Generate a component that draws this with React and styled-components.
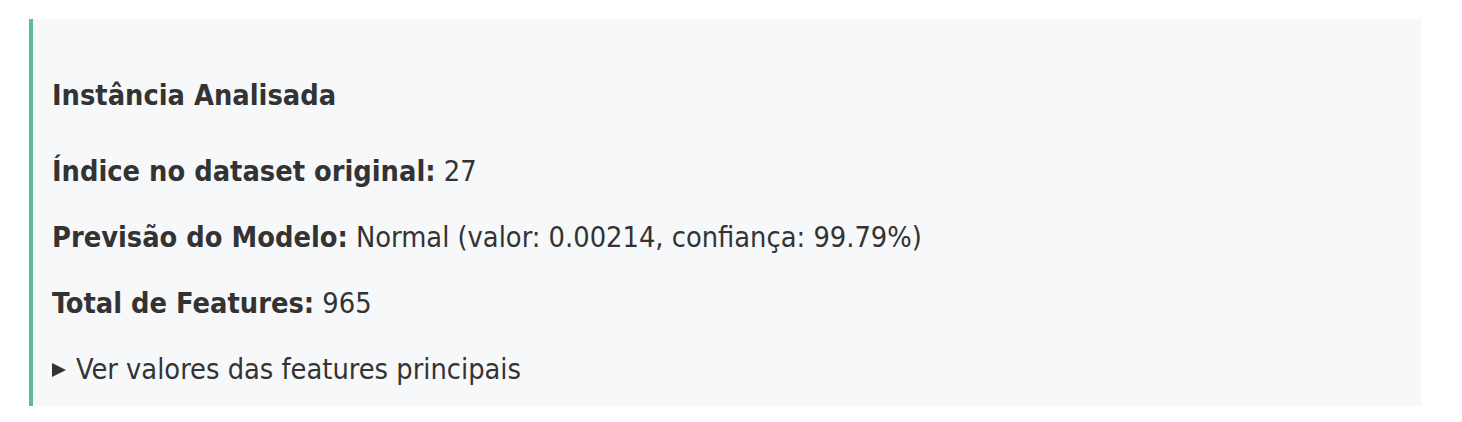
import styled, { createGlobalStyle } from "styled-components";

const GlobalStyle = createGlobalStyle`
  body {
    margin: 0;
    background: #ffffff;
    font-family: "DejaVu Sans Condensed", "DejaVu Sans", sans-serif;
    color: #333333;
  }
`;

const Page = styled.div`
  padding: 19px 41px 0 29px;
`;

const Card = styled.div`
  background: #f7f8fa;
  border-left: 4px solid #5dbb9d;
  padding: 58px 20px 19px 19px;
  font-size: 28.7px;
`;

const Title = styled.h4`
  margin: 0 0 40px;
  font-size: 28.7px;
  line-height: 36px;
  font-weight: bold;
`;

const Line = styled.p`
  margin: 0 0 30px;
  line-height: 36px;
`;

const Label = styled.strong`
  font-weight: bold;
`;

const Details = styled.details`
  line-height: 36px;
`;

const Summary = styled.summary`
  display: flex;
  align-items: center;
  cursor: pointer;
  list-style: none;
  &::-webkit-details-marker {
    display: none;
  }
`;

const Arrow = styled.span`
  width: 0;
  height: 0;
  border-top: 7.5px solid transparent;
  border-bottom: 7.5px solid transparent;
  border-left: 14px solid #333333;
  margin: 2px 10px 0 0;
`;

export default function App() {
  return (
    <>
      <GlobalStyle />
      <Page>
        <Card>
          <Title>Instância Analisada</Title>
          <Line>
            <Label>Índice no dataset original:</Label> 27
          </Line>
          <Line>
            <Label>Previsão do Modelo:</Label> Normal (valor: 0.00214, confiança: 99.79%)
          </Line>
          <Line>
            <Label>Total de Features:</Label> 965
          </Line>
          <Details>
            <Summary>
              <Arrow />
              Ver valores das features principais
            </Summary>
          </Details>
        </Card>
      </Page>
    </>
  );
}
